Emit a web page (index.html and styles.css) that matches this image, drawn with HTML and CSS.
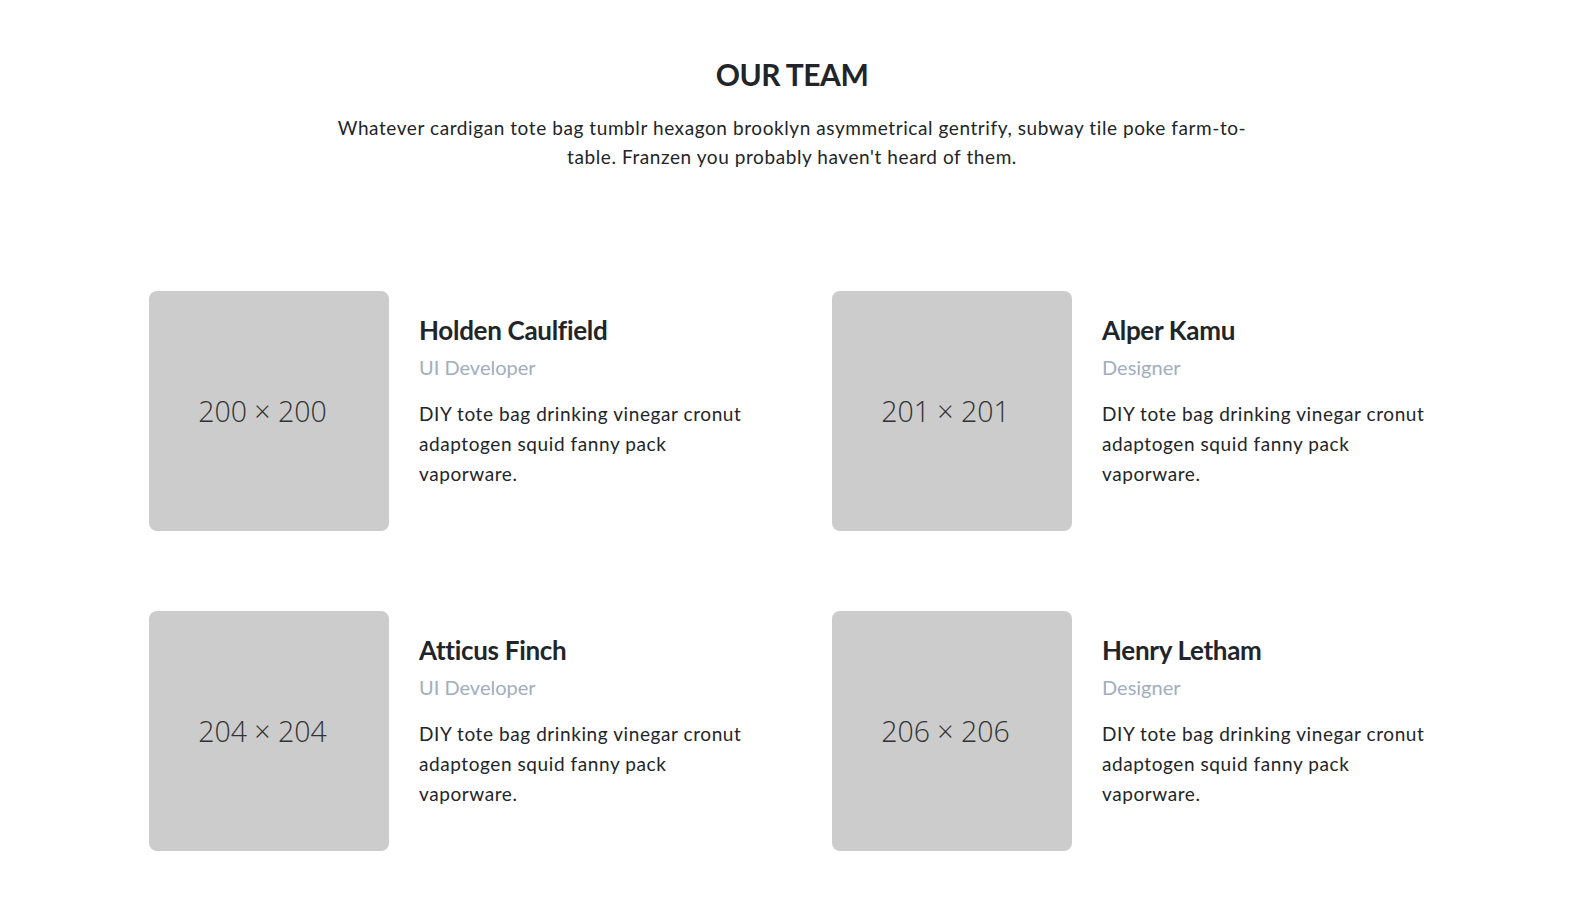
FILE: index.html
```html
<!DOCTYPE html>
<html lang="en">
<head>
<meta charset="utf-8">
<title>Our Team</title>
<link rel="stylesheet" href="styles.css">
</head>
<body>
<section class="team">
  <header class="team-head">
    <h1 class="team-title">OUR TEAM</h1>
    <p class="team-lead">Whatever cardigan tote bag tumblr hexagon brooklyn asymmetrical gentrify, subway tile poke farm-to-table. Franzen you probably haven't heard of them.</p>
  </header>
  <div class="team-grid">
    <div class="member">
      <div class="photo"><span>200 × 200</span></div>
      <div class="info">
        <h2 class="name">Holden Caulfield</h2>
        <h3 class="role">UI Developer</h3>
        <p class="bio">DIY tote bag drinking vinegar cronut adaptogen squid fanny pack vaporware.</p>
      </div>
    </div>
    <div class="member">
      <div class="photo"><span>201 × 201</span></div>
      <div class="info">
        <h2 class="name">Alper Kamu</h2>
        <h3 class="role">Designer</h3>
        <p class="bio">DIY tote bag drinking vinegar cronut adaptogen squid fanny pack vaporware.</p>
      </div>
    </div>
    <div class="member">
      <div class="photo"><span>204 × 204</span></div>
      <div class="info">
        <h2 class="name">Atticus Finch</h2>
        <h3 class="role">UI Developer</h3>
        <p class="bio">DIY tote bag drinking vinegar cronut adaptogen squid fanny pack vaporware.</p>
      </div>
    </div>
    <div class="member">
      <div class="photo"><span>206 × 206</span></div>
      <div class="info">
        <h2 class="name">Henry Letham</h2>
        <h3 class="role">Designer</h3>
        <p class="bio">DIY tote bag drinking vinegar cronut adaptogen squid fanny pack vaporware.</p>
      </div>
    </div>
  </div>
</section>
</body>
</html>
```

FILE: styles.css
```css
* { box-sizing: border-box; }

html, body {
  margin: 0;
  padding: 0;
  background: #ffffff;
}

body {
  font-family: Lato, "Noto Sans", sans-serif;
  color: #212529;
}

.team {
  padding-top: 56px;
}

.team-head {
  text-align: center;
}

.team-title {
  margin: 0;
  font-size: 30px;
  line-height: 36px;
  font-weight: 700;
  letter-spacing: -0.5px;
  color: #212529;
}

.team-lead {
  margin: 21px auto 0;
  max-width: 930px;
  font-size: 19px;
  line-height: 29.4px;
  letter-spacing: 0.58px;
  color: #212529;
}

.team-grid {
  width: 1286px;
  margin: 119px auto 0;
  display: grid;
  grid-template-columns: 1fr 1fr;
  column-gap: 80px;
  row-gap: 80px;
}

.member {
  display: flex;
  align-items: flex-start;
}

.photo {
  flex: 0 0 240px;
  width: 240px;
  height: 240px;
  border-radius: 8px;
  background: #cccccc;
  display: flex;
  align-items: center;
  justify-content: center;
  padding-right: 13px;
}

.photo span {
  font-family: "Open Sans", sans-serif;
  font-weight: 300;
  font-size: 28.5px;
  color: #333333;
}

.info {
  flex: 1;
  padding-left: 30px;
  padding-top: 23px;
}

.name {
  margin: 0;
  font-size: 26px;
  line-height: 32px;
  font-weight: 700;
  letter-spacing: -0.3px;
  color: #212529;
}

.role {
  margin: 7px 0 0;
  font-size: 20px;
  line-height: 28px;
  font-weight: 400;
  color: #a0aec0;
}

.bio {
  margin: 18px 0 0;
  font-size: 19px;
  line-height: 30.3px;
  letter-spacing: 0.58px;
  color: #212529;
}
```
